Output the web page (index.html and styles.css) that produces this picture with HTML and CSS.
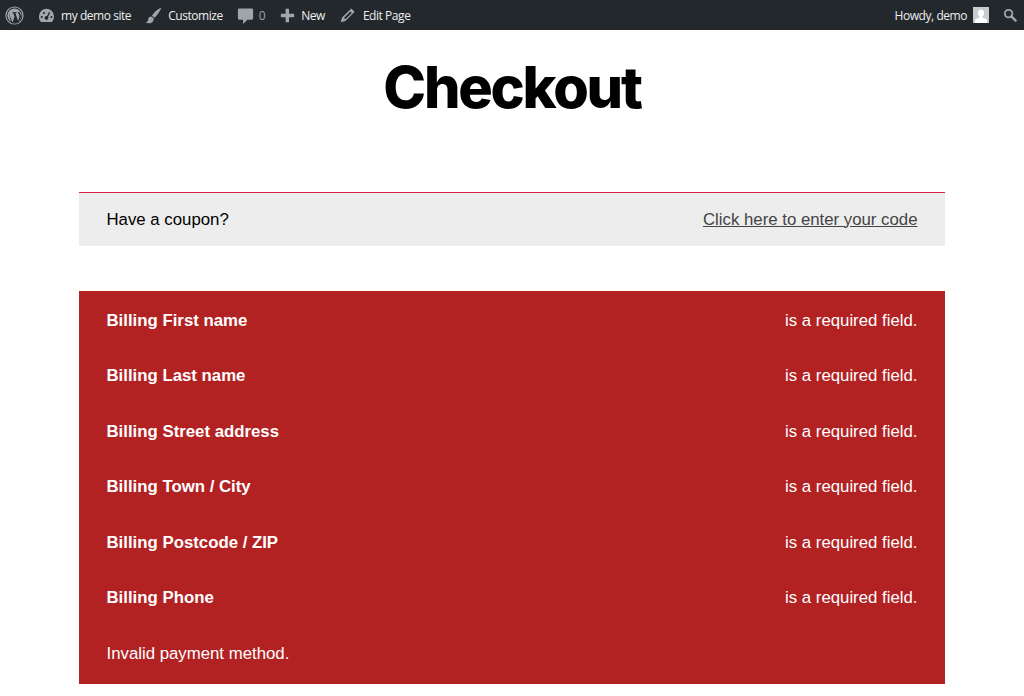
FILE: index.html
```html
<!DOCTYPE html>
<html lang="en">
<head>
<meta charset="utf-8">
<title>Checkout</title>
<link rel="stylesheet" href="styles.css">
</head>
<body>
<header class="adminbar">
  <nav class="bar-left">
    <span class="bar-item wp"><svg class="ico" viewBox="0 0 20 20"><circle cx="10" cy="10" r="9" fill="none" stroke="#a0a5aa" stroke-width="1.2"/><circle cx="10" cy="10" r="7.4" fill="#a0a5aa"/><path d="M3.800 6.600 L7.900 17.600 L10 11.400 L8.700 7.500 L7.500 7.300 L7.500 6.500 L12.200 6.500 L12.200 7.300 L11 7.500 L13.800 15.800 L15 11.800 C15.600 9.600 14.600 8.800 14.100 7.800 C13.600 6.800 14 5.900 15 5.700 L17.300 11 L13.700 18.200 L6.600 18.200 Z" fill="#23282d"/></svg></span>
    <span class="bar-item"><svg class="ico" viewBox="0 0 20 20"><path d="M10 3a8 8 0 0 0-8 8c0 2.300.9 4.400 2.300 5.800h11.400A8.200 8.200 0 0 0 18 11a8 8 0 0 0-8-8z" fill="#a0a5aa"/><circle cx="10" cy="12.500" r="2" fill="#23282d"/><path d="M10.300 12.500 L13.300 6.500" stroke="#23282d" stroke-width="1.400"/><circle cx="5" cy="11.500" r="1.100" fill="#23282d"/><circle cx="7.300" cy="7.300" r="1.100" fill="#23282d"/><circle cx="15.200" cy="11.500" r="1.100" fill="#23282d"/></svg>my demo site</span>
    <span class="bar-item"><svg class="ico" viewBox="0 0 20 20"><path d="M18.300 1.500 C14.500 3 10.500 6.500 8.300 10.200 L11 12.400 C14.300 9.500 17 5.500 18.300 1.500z M7.500 11 C4.800 11.200 4.500 13 4.300 14.800 C4.100 16.200 3.300 17 1.800 17.400 C4.500 18.800 8.300 18.400 9.700 15.800 C10.300 14.600 10.300 13.300 10.200 12.900z" fill="#a0a5aa"/></svg>Customize</span>
    <span class="bar-item muted"><svg class="ico" viewBox="0 0 20 20"><path d="M3.500 2.500h13a1.500 1.500 0 0 1 1.500 1.500v9a1.500 1.500 0 0 1-1.500 1.500H12l-4.500 4.500v-4.500h-4A1.500 1.500 0 0 1 2 13V4a1.500 1.500 0 0 1 1.500-1.500z" fill="#a0a5aa"/></svg>0</span>
    <span class="bar-item tight"><svg class="ico" viewBox="0 0 20 20"><path d="M8 3h3.600v5.200H17v3.600h-5.400V17H8v-5.200H3V8.200h5z" fill="#a0a5aa"/></svg>New</span>
    <span class="bar-item wide"><svg class="ico" viewBox="0 0 20 20"><path d="M14 2.500 L17.500 6 L7.800 15.700 L2.800 17.200 L4.300 12.200z M13 5.800 L6.300 12.500 L7.800 14 L14.500 7.300z" fill="#a0a5aa" fill-rule="evenodd"/></svg>Edit Page</span>
  </nav>
  <div class="bar-right">
    <span class="howdy">Howdy, demo<svg class="avatar" viewBox="0 0 16 16"><rect width="16" height="16" fill="#c9cbcd"/><path d="M8 2.500c1.900 0 3 1.500 3 3.400 0 1.600-.7 3-1.600 3.700v1c1.500.5 4 1.200 4.600 2.600V16H2v-2.800c.6-1.400 3.100-2.100 4.600-2.600v-1C5.700 8.900 5 7.500 5 5.900 5 4 6.100 2.500 8 2.500z" fill="#fff"/></svg></span>
    <svg class="ico-search" viewBox="0 0 20 20"><circle cx="8" cy="8" r="5.400" fill="none" stroke="#a0a5aa" stroke-width="2.600"/><path d="M12 12 L18 18" stroke="#a0a5aa" stroke-width="3.400" stroke-linecap="round"/></svg>
  </div>
</header>

<main class="page">
  <h1 class="title">Checkout</h1>

  <div class="coupon">
    <span>Have a coupon?</span>
    <a class="coupon-link" href="#">Click here to enter your code</a>
  </div>

  <ul class="errors">
    <li class="error"><strong>Billing First name</strong><span>is a required field.</span></li>
    <li class="error"><strong>Billing Last name</strong><span>is a required field.</span></li>
    <li class="error"><strong>Billing Street address</strong><span>is a required field.</span></li>
    <li class="error"><strong>Billing Town / City</strong><span>is a required field.</span></li>
    <li class="error"><strong>Billing Postcode / ZIP</strong><span>is a required field.</span></li>
    <li class="error"><strong>Billing Phone</strong><span>is a required field.</span></li>
    <li class="error"><span>Invalid payment method.</span></li>
  </ul>
</main>
</body>
</html>
```

FILE: styles.css
```css
* { box-sizing: border-box; }
html, body { margin: 0; padding: 0; }
body {
  background: #fff;
  color: #000;
  font-family: "Liberation Sans", Arial, sans-serif;
  height: 696px;
  overflow: hidden;
}

.adminbar {
  height: 30px;
  background: #23282d;
  color: #eee;
  font-family: "Open Sans", "Noto Sans", sans-serif;
  font-size: 12px;
  letter-spacing: -0.45px;
  display: flex;
  justify-content: space-between;
  align-items: center;
}
.bar-left { display: flex; align-items: center; padding-left: 5px; gap: 13px; }
.bar-item { display: flex; align-items: center; gap: 5px; white-space: nowrap; }
.bar-item.muted { color: #a0a5aa; gap: 4px; }
.bar-item.tight { gap: 4px; }
.bar-item.wide { gap: 6px; }
.ico { width: 19px; height: 19px; display: block; }
.bar-right { display: flex; align-items: center; padding-right: 7px; gap: 14px; }
.howdy { display: flex; align-items: center; gap: 6px; white-space: nowrap; }
.avatar { width: 16px; height: 16px; display: block; }
.ico-search { width: 14px; height: 14px; display: block; }

.page { padding: 0 79px; }
.title {
  margin: 0;
  padding-top: 26px;
  height: 162px;
  text-align: center;
  font-family: Inter, "Liberation Sans", sans-serif;
  font-size: 57.600px;
  line-height: 62px;
  font-weight: 800;
  letter-spacing: -2.250px;
}

.coupon {
  height: 54px;
  border-top: 1px solid #d5234f;
  background: #ededed;
  padding: 0 27.500px;
  display: flex;
  justify-content: space-between;
  align-items: center;
  font-size: 16.800px;
}
.coupon-link { color: #444; text-decoration: underline; }

.errors {
  list-style: none;
  margin: 45px 0 0;
  padding: 0;
  background: #b22222;
  color: #fff;
  font-size: 16.800px;
}
.error {
  height: 55.500px;
  padding: 4px 27.500px 0;
  display: flex;
  justify-content: space-between;
  align-items: center;
}
.error:last-child { height: 60px; padding: 3px 27.500px 4px; }
```
